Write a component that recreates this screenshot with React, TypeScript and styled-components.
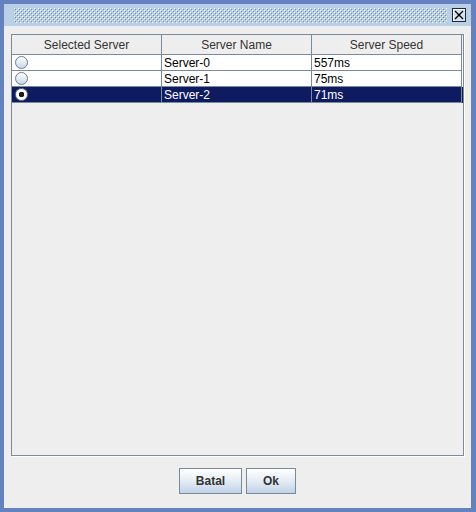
import styled, { createGlobalStyle } from 'styled-components'

const GlobalStyle = createGlobalStyle`
  html, body {
    margin: 0;
    padding: 0;
    background: #eeeeee;
  }
  body {
    font-family: "Liberation Sans", Arial, sans-serif;
    font-size: 12px;
  }
`

const Frame = styled.div`
  width: 476px;
  height: 512px;
  box-sizing: border-box;
  border: 4px solid #6382bf;
  border-right-width: 5px;
  display: flex;
  flex-direction: column;
  background: #eeeeee;
`

const TitleBar = styled.div`
  height: 22px;
  background: #b8cfe5;
  display: flex;
  align-items: center;
  padding: 0 5px 0 10px;
  gap: 5px;
`

const Bumps = styled.svg`
  flex: 1;
  height: 15px;
  display: block;
`

const CloseButton = styled.div`
  width: 14px;
  height: 14px;
  box-sizing: border-box;
  border: 1px solid #1e2a44;
  background: #d6e2ee;
  box-shadow: inset 1px 1px 0 #ffffff;
  display: flex;
  align-items: center;
  justify-content: center;
`

const Content = styled.div`
  flex: 1;
  display: flex;
  flex-direction: column;
  padding: 8px 7px 14px 7px;
`

const ScrollPane = styled.div`
  flex: 1;
  border: 1px solid #7a8a99;
  box-shadow: 1px 1px 0 #ffffff;
  background: #eeeeee;
  display: flex;
  flex-direction: column;
`

const Row = styled.div<{ $selected?: boolean }>`
  display: grid;
  grid-template-columns: 150px 150px 150px;
  height: 16px;
  background: ${p => (p.$selected ? '#0f1b60' : '#ffffff')};
  color: ${p => (p.$selected ? '#ffffff' : '#000000')};
`

const HeaderRow = styled.div`
  display: grid;
  grid-template-columns: 150px 150px 150px;
  height: 20px;
`

const HeaderCell = styled.div`
  border-right: 1px solid #7a8a99;
  border-bottom: 1px solid #7a8a99;
  color: #333333;
  display: flex;
  align-items: center;
  justify-content: center;
  padding-top: 1px;
`

const Cell = styled.div<{ $pad?: number }>`
  border-right: 1px solid #7a8a99;
  border-bottom: 1px solid #7a8a99;
  display: flex;
  align-items: center;
  padding-left: ${p => p.$pad ?? 2}px;
  padding-top: 1px;
  white-space: nowrap;
  overflow: hidden;
`

const Radio = styled.span<{ $checked?: boolean }>`
  width: 13px;
  height: 13px;
  box-sizing: border-box;
  border-radius: 50%;
  border: 1px solid #6d7c8c;
  background: ${p =>
    p.$checked
      ? 'radial-gradient(circle at 50% 50%, #1a1a1a 0 2.6px, #ffffff 3px)'
      : 'linear-gradient(#ffffff, #c6d6e8)'};
  display: inline-block;
  margin-top: -1px;
`

const ButtonBar = styled.div`
  display: flex;
  justify-content: center;
  gap: 4px;
  padding-top: 12px;
`

const Button = styled.button<{ $width: number }>`
  width: ${p => p.$width}px;
  height: 26px;
  border: 1px solid #7a8a99;
  background: linear-gradient(#ffffff 0%, #e4ecf5 50%, #c0d2e6 100%);
  font-family: "Liberation Sans", Arial, sans-serif;
  font-size: 12px;
  font-weight: bold;
  color: #333333;
  padding: 0;
  cursor: pointer;
`

const servers = [
  { name: 'Server-0', speed: '557ms' },
  { name: 'Server-1', speed: '75ms' },
  { name: 'Server-2', speed: '71ms' },
]

export default function App() {
  const selected = 2

  return (
    <>
      <GlobalStyle />
      <Frame>
        <TitleBar>
          <Bumps>
            <defs>
              <pattern id="bumps" width="4" height="4" patternUnits="userSpaceOnUse">
                <rect x="0" y="0" width="1" height="1" fill="#ffffff" />
                <rect x="1" y="1" width="1" height="1" fill="#6382bf" />
                <rect x="2" y="2" width="1" height="1" fill="#ffffff" />
                <rect x="3" y="3" width="1" height="1" fill="#6382bf" />
              </pattern>
            </defs>
            <rect width="100%" height="100%" fill="url(#bumps)" />
          </Bumps>
          <CloseButton>
            <svg width="10" height="10" viewBox="0 0 10 10">
              <path d="M1 1 L9 9 M9 1 L1 9" stroke="#000" strokeWidth="1.4" />
            </svg>
          </CloseButton>
        </TitleBar>
        <Content>
          <ScrollPane>
            <HeaderRow>
              <HeaderCell>Selected Server</HeaderCell>
              <HeaderCell>Server Name</HeaderCell>
              <HeaderCell>Server Speed</HeaderCell>
            </HeaderRow>
            {servers.map((s, i) => (
              <Row key={s.name} $selected={i === selected}>
                <Cell $pad={3}>
                  <Radio $checked={i === selected} />
                </Cell>
                <Cell>{s.name}</Cell>
                <Cell>{s.speed}</Cell>
              </Row>
            ))}
          </ScrollPane>
          <ButtonBar>
            <Button $width={63}>Batal</Button>
            <Button $width={50}>Ok</Button>
          </ButtonBar>
        </Content>
      </Frame>
    </>
  )
}
